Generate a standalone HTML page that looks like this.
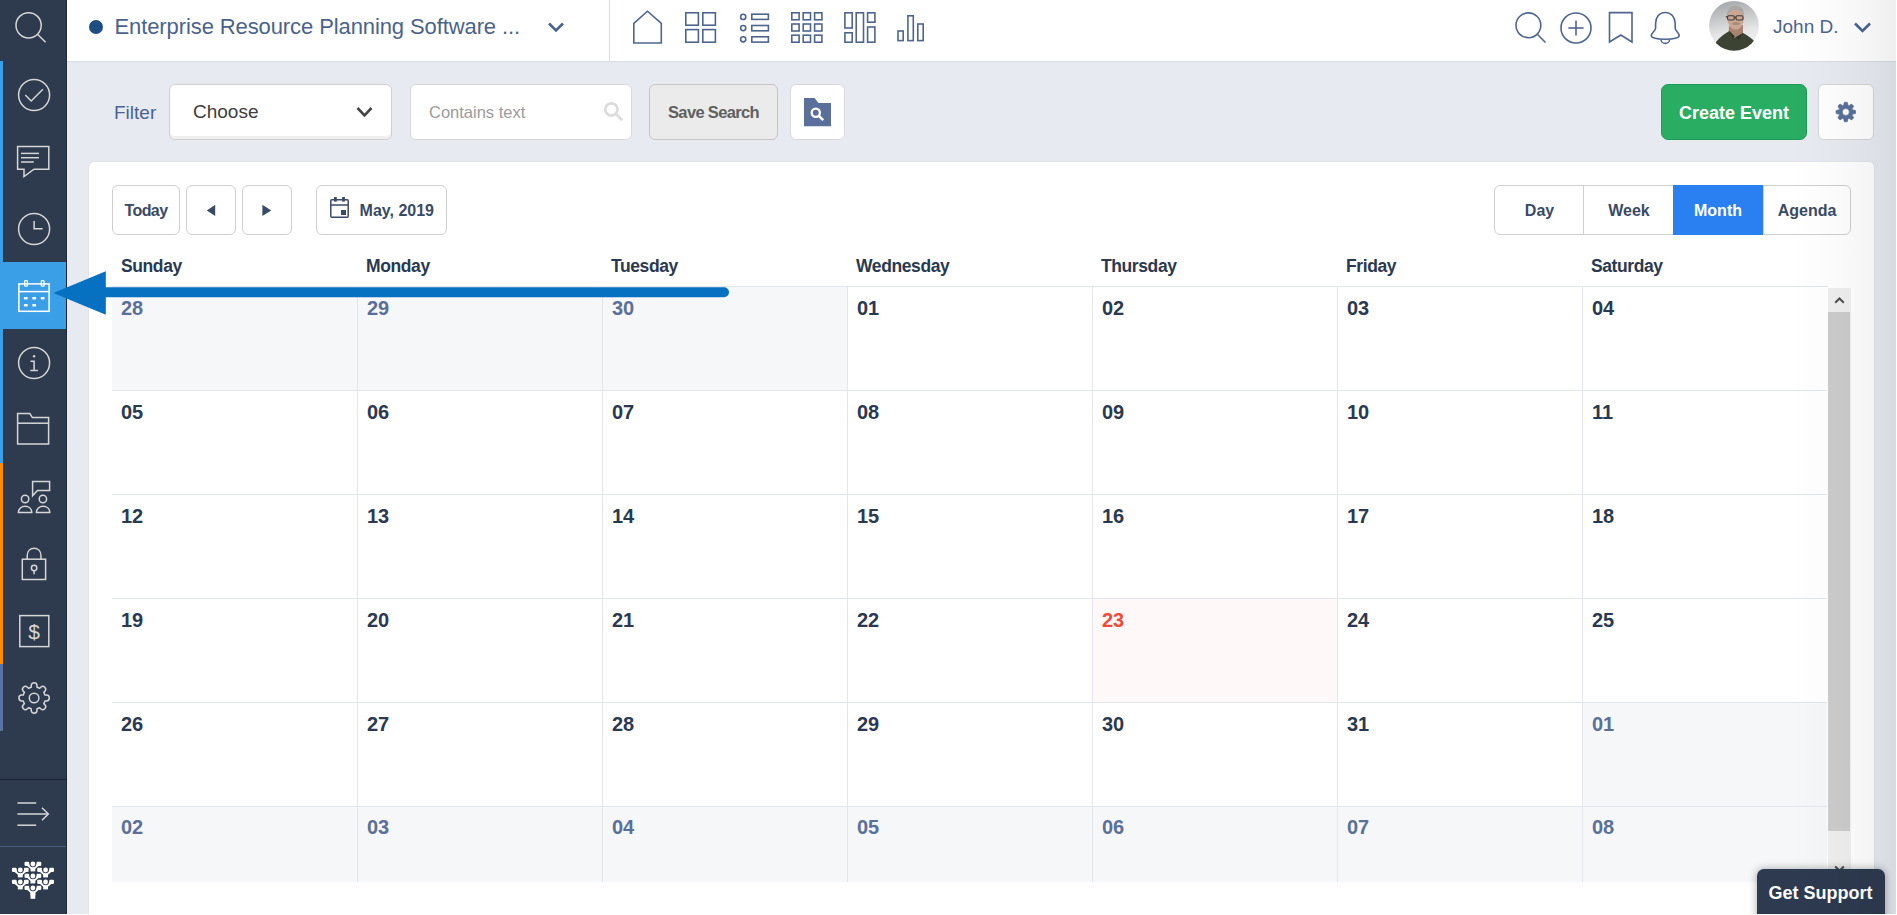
<!DOCTYPE html>
<html><head><meta charset="utf-8">
<style>
*{margin:0;padding:0;box-sizing:border-box}
html,body{width:1897px;height:915px;overflow:hidden;background:#e7eaf1;font-family:"Liberation Sans",sans-serif}
.a{position:absolute}
svg{position:absolute;overflow:visible}
.t{position:absolute;white-space:nowrap;line-height:1}
#sb{position:absolute;left:0;top:0;width:67px;height:915px;background:#2e3a4e;border-right:1px solid #1f2838}
#hdr{position:absolute;left:67px;top:0;width:1830px;height:62px;background:#fff;border-bottom:1px solid #d6dce6}
.card{position:absolute;left:89px;top:162px;width:1785px;height:760px;background:#fff;border-radius:5px;box-shadow:0 0 1.5px rgba(0,0,0,0.12)}
.btn{position:absolute;border:1px solid #cfcfcf;border-radius:6px;background:#fff}
.cell{position:absolute;width:245px;height:104px;border-left:1px solid #e3e6ee;border-top:1px solid #e3e6ee;background:#fff}
.cell.o{background:#f6f7f9}
.cell.td{background:#fff8f8}
.num{position:absolute;left:9px;top:11px;font-weight:bold;font-size:20px;color:#2b3950;line-height:1}
.o .num{color:#5a7099}
.td .num{color:#ef4a3b}
.dh{position:absolute;top:257.7px;font-weight:bold;font-size:17.5px;color:#2b3950;line-height:1;letter-spacing:-0.4px}
</style></head><body>
<div id="hdr"></div>
<div class="a" style="left:609px;top:0;width:1px;height:61px;background:#d6dce6"></div>
<svg width="1897" height="62" style="left:0;top:0">
<circle cx="96" cy="27" r="7" fill="#1f4e82"/>
<g fill="none" stroke="#4a6491" stroke-width="2.6"><polyline points="549,23.5 556,30.5 563,23.5"/><polyline points="1855,23.5 1862.5,31 1870,23.5"/></g>
<g fill="none" stroke="#4e6590" stroke-width="1.6">
<path d="M633.8,43 V23.3 L647.5,11.2 L661.3,23.3 V43 Z"/>
<rect x="685.8" y="12.8" width="12.6" height="12.4"/><rect x="702.8" y="12.8" width="12.6" height="12.4"/>
<rect x="685.8" y="29.6" width="12.6" height="12.6"/><rect x="702.8" y="29.6" width="12.6" height="12.6"/>
<circle cx="743.2" cy="16.9" r="2.6"/><circle cx="743.2" cy="28.1" r="2.6"/><circle cx="743.2" cy="39.3" r="2.6"/>
<rect x="751.8" y="14.2" width="16.6" height="5.2"/><rect x="751.8" y="25.5" width="16.6" height="5.3"/><rect x="751.8" y="36.8" width="16.6" height="5.3"/>
<rect x="791.8" y="12.8" width="7.3" height="7"/><rect x="803.2" y="12.8" width="7.3" height="7"/><rect x="814.6" y="12.8" width="7.3" height="7"/>
<rect x="791.8" y="24" width="7.3" height="7"/><rect x="803.2" y="24" width="7.3" height="7"/><rect x="814.6" y="24" width="7.3" height="7"/>
<rect x="791.8" y="35.2" width="7.3" height="7"/><rect x="803.2" y="35.2" width="7.3" height="7"/><rect x="814.6" y="35.2" width="7.3" height="7"/>
<rect x="844.9" y="12.8" width="7.3" height="15.2"/><rect x="844.9" y="32.8" width="7.3" height="9.4"/>
<rect x="856.2" y="12.8" width="7.3" height="29.4"/>
<rect x="867.6" y="12.8" width="7.3" height="9.4"/><rect x="867.6" y="27" width="7.3" height="15.2"/>
<rect x="898" y="31" width="5.2" height="9.6"/><rect x="907.9" y="15.8" width="5.4" height="24.8"/><rect x="917.8" y="24" width="5.4" height="16.6"/>
<circle cx="1528.4" cy="25.3" r="12.4"/><line x1="1537.3" y1="34.2" x2="1545.5" y2="42.5"/>
<circle cx="1576" cy="28" r="15"/><line x1="1568.4" y1="28" x2="1583.6" y2="28"/><line x1="1576" y1="20.6" x2="1576" y2="35.6"/>
<path d="M1609.5,12.6 H1632 V42 L1620.8,35 L1609.5,42 Z"/>
<path d="M1665.2,12.5 C1659,12.5 1655.6,17.5 1655.6,23.5 L1655.6,28 C1655.6,31 1651.3,33 1651.3,35.6 C1651.3,38.3 1657,39.2 1665.2,39.2 C1673.4,39.2 1679.2,38.3 1679.2,35.6 C1679.2,33 1675.2,31 1675.2,28 L1675.2,23.5 C1675.2,17.5 1671.4,12.5 1665.2,12.5 Z"/>
<path d="M1661,39.4 A4.3,4 0 0 0 1669.6,39.4"/>
</g>
</svg>
<div class="t" style="left:114.5px;top:16.4px;font-size:22px;color:#4b6389;letter-spacing:-0.1px">Enterprise Resource Planning Software ...</div>
<svg width="52" height="52" style="left:1708px;top:0px" viewBox="0 0 52 52">
<defs><linearGradient id="av" x1="0.3" y1="0" x2="0.5" y2="1"><stop offset="0" stop-color="#a3a7ab"/><stop offset="0.65" stop-color="#e6e6e6"/><stop offset="1" stop-color="#f0f0f0"/></linearGradient>
<clipPath id="avc"><circle cx="26" cy="25.8" r="24.9"/></clipPath></defs>
<circle cx="26" cy="25.8" r="24.9" fill="url(#av)"/>
<g clip-path="url(#avc)">
<path d="M21,26 L20.5,34 L27,42 L35,34 L35,25 Z" fill="#a88470"/>
<ellipse cx="27.6" cy="18" rx="8.4" ry="11.6" fill="#caa592"/>
<path d="M19.3,17 C18.6,9 22,5.8 27.5,5.8 C33,5.8 36.6,9 36,17 C35,12.5 32.5,10.2 27.5,10.2 C22.5,10.2 20.3,12.5 19.3,17 Z" fill="#aaa7a2"/>
<ellipse cx="28" cy="23.5" rx="3.6" ry="1.6" fill="#8f7a70" opacity="0.6"/>
<g fill="none" stroke="#3f3a36" stroke-width="1.1"><rect x="19.6" y="15.8" width="6.6" height="4.2" rx="1.2"/><rect x="28" y="15.8" width="7" height="4.2" rx="1.2"/><line x1="26.2" y1="17.2" x2="28" y2="17.2"/><line x1="17.8" y1="16.6" x2="19.6" y2="17"/></g>
<path d="M8,42 C12,37 17,33.5 21.5,31 L26.5,38 L35,33 C40,35.5 44,38.5 47,42 L47,56 L8,56 Z" fill="#3d4332"/>
<path d="M21.5,31 L24.5,38.5 L27,36.5 Z M35,33 L30.5,40.5 L28,37 Z" fill="#30352a"/>
</g>
</svg>
<div class="t" style="left:1773px;top:16.6px;font-size:19px;color:#4a6491">John D.</div>
<div class="t" style="left:114px;top:102.9px;font-size:19px;color:#4a6491">Filter</div>
<div class="btn" style="left:169px;top:84px;width:223px;height:56px;border-color:#d0d0d0;box-shadow:inset 0 -3px 0 #f0f0f0"></div>
<div class="t" style="left:193px;top:102.4px;font-size:19px;color:#3d3d3d">Choose</div>
<svg width="20" height="20" style="left:0;top:0"><polyline points="357.5,108 364.5,115.3 371.5,108" fill="none" stroke="#444" stroke-width="2.6"/></svg>
<div class="btn" style="left:410px;top:84px;width:222px;height:56px;border-color:#d9d9d9"></div>
<div class="t" style="left:429px;top:104.4px;font-size:16.5px;color:#9b9b9b">Contains text</div>
<svg width="10" height="10" style="left:0;top:0"><g fill="none" stroke="#dcdcdc" stroke-width="2.8"><circle cx="611.4" cy="109.4" r="6.1"/><line x1="615.8" y1="113.8" x2="622.2" y2="120.2"/></g></svg>
<div class="btn" style="left:649px;top:84px;width:129px;height:56px;background:#ebebeb;border-color:#c4c4c4"></div>
<div class="t" style="left:668px;top:104px;font-size:16.5px;font-weight:bold;color:#606060;letter-spacing:-0.65px">Save Search</div>
<div class="btn" style="left:790px;top:84px;width:55px;height:56px;border-color:#d9d9d9"></div>
<svg width="10" height="10" style="left:0;top:0"><path d="M804,98 H814.6 L818.4,103 H831 V126.3 H804 Z" fill="#5a709a"/><g fill="none" stroke="#fff"><circle cx="815.8" cy="112.8" r="4.1" stroke-width="2.3"/><line x1="818.8" y1="115.8" x2="823.2" y2="120.2" stroke-width="2.6"/></g></svg>
<div class="a" style="left:1661px;top:84px;width:146px;height:56px;background:#29ad62;border:1px solid #1f9b55;border-radius:7px"></div>
<div class="t" style="left:1679px;top:103.8px;font-size:18px;font-weight:bold;color:#fff">Create Event</div>
<div class="btn" style="left:1818px;top:84px;width:56px;height:56px;border-color:#d5d5d5"></div>
<svg width="10" height="10" style="left:0;top:0"><g transform="translate(1845.8,112)" fill="#5a709a" stroke="#5a709a" stroke-width="0.7" stroke-linejoin="round" fill-rule="evenodd">
<path d="M-2.30,-6.51 L-1.45,-9.70 L1.45,-9.70 L2.30,-6.51 A6.90,6.90 0 0 1 2.97,-6.23 L5.83,-7.88 L7.88,-5.83 L6.23,-2.97 A6.90,6.90 0 0 1 6.51,-2.30 L9.70,-1.45 L9.70,1.45 L6.51,2.30 A6.90,6.90 0 0 1 6.23,2.97 L7.88,5.83 L5.83,7.88 L2.97,6.23 A6.90,6.90 0 0 1 2.30,6.51 L1.45,9.70 L-1.45,9.70 L-2.30,6.51 A6.90,6.90 0 0 1 -2.97,6.23 L-5.83,7.88 L-7.88,5.83 L-6.23,2.97 A6.90,6.90 0 0 1 -6.51,2.30 L-9.70,1.45 L-9.70,-1.45 L-6.51,-2.30 A6.90,6.90 0 0 1 -6.23,-2.97 L-7.88,-5.83 L-5.83,-7.88 L-2.97,-6.23 A6.90,6.90 0 0 1 -2.30,-6.51 Z M3.5,0 A3.5,3.5 0 1 0 -3.5,0 A3.5,3.5 0 1 0 3.5,0 Z"/>
</g></svg>
<div class="card"></div>
<div class="btn" style="left:112px;top:185px;width:68px;height:50px"></div>
<div class="t" style="left:124.5px;top:203.1px;font-size:16px;font-weight:bold;color:#3a4a66;letter-spacing:-0.6px">Today</div>
<div class="btn" style="left:186px;top:185px;width:50px;height:50px"></div>
<div class="btn" style="left:242px;top:185px;width:50px;height:50px"></div>
<div class="btn" style="left:316px;top:185px;width:131px;height:50px"></div>
<svg width="10" height="10" style="left:0;top:0">
<polygon points="206.8,210.4 215.2,204.8 215.2,216" fill="#3a4a66"/>
<polygon points="262.4,204.8 271.2,210.4 262.4,216" fill="#3a4a66"/>
<g fill="none" stroke="#3a4a66" stroke-width="1.5"><rect x="330.8" y="199.8" width="17.4" height="17.4" rx="1"/><line x1="331" y1="205" x2="348" y2="205"/></g>
<g fill="#3a4a66"><rect x="334" y="197" width="2.8" height="4.6"/><rect x="342.1" y="197" width="2.8" height="4.6"/><rect x="341" y="210" width="5" height="5"/></g>
</svg>
<div class="t" style="left:359.6px;top:203.1px;font-size:16px;font-weight:bold;color:#3a4a66">May, 2019</div>
<div class="btn" style="left:1494px;top:185px;width:357px;height:50px"></div>
<div class="a" style="left:1583px;top:186px;width:1px;height:48px;background:#cfcfcf"></div>
<div class="a" style="left:1763px;top:186px;width:1px;height:48px;background:#cfcfcf"></div>
<div class="a" style="left:1673px;top:185px;width:90px;height:50px;background:#2a7ff1"></div>
<div class="t" style="left:1539.5px;top:202.5px;font-size:16px;font-weight:bold;color:#3a4a66;transform:translateX(-50%)">Day</div>
<div class="t" style="left:1629px;top:202.5px;font-size:16px;font-weight:bold;color:#3a4a66;transform:translateX(-50%)">Week</div>
<div class="t" style="left:1718px;top:202.5px;font-size:16px;font-weight:bold;color:#fff;transform:translateX(-50%)">Month</div>
<div class="t" style="left:1807px;top:202.5px;font-size:16px;font-weight:bold;color:#3a4a66;transform:translateX(-50%)">Agenda</div>
<div class="dh" style="left:121px">Sunday</div>
<div class="dh" style="left:366px">Monday</div>
<div class="dh" style="left:611px">Tuesday</div>
<div class="dh" style="left:856px">Wednesday</div>
<div class="dh" style="left:1101px">Thursday</div>
<div class="dh" style="left:1346px">Friday</div>
<div class="dh" style="left:1591px">Saturday</div>
<div class="a" style="left:112px;top:286px;width:1716px;height:1px;background:#e3e6ee"></div>
<div class="cell o" style="left:112px;top:286px;height:104px;border-left:0;border-top:0;top:287px;height:103px"><div class="num">28</div></div>
<div class="cell o" style="left:357px;top:286px;height:104px;border-top:0;top:287px;height:103px"><div class="num">29</div></div>
<div class="cell o" style="left:602px;top:286px;height:104px;border-top:0;top:287px;height:103px"><div class="num">30</div></div>
<div class="cell" style="left:847px;top:286px;height:104px;border-top:0;top:287px;height:103px"><div class="num">01</div></div>
<div class="cell" style="left:1092px;top:286px;height:104px;border-top:0;top:287px;height:103px"><div class="num">02</div></div>
<div class="cell" style="left:1337px;top:286px;height:104px;border-top:0;top:287px;height:103px"><div class="num">03</div></div>
<div class="cell" style="left:1582px;top:286px;height:104px;border-top:0;top:287px;height:103px"><div class="num">04</div></div>
<div class="cell" style="left:112px;top:390px;height:104px;border-left:0"><div class="num">05</div></div>
<div class="cell" style="left:357px;top:390px;height:104px"><div class="num">06</div></div>
<div class="cell" style="left:602px;top:390px;height:104px"><div class="num">07</div></div>
<div class="cell" style="left:847px;top:390px;height:104px"><div class="num">08</div></div>
<div class="cell" style="left:1092px;top:390px;height:104px"><div class="num">09</div></div>
<div class="cell" style="left:1337px;top:390px;height:104px"><div class="num">10</div></div>
<div class="cell" style="left:1582px;top:390px;height:104px"><div class="num">11</div></div>
<div class="cell" style="left:112px;top:494px;height:104px;border-left:0"><div class="num">12</div></div>
<div class="cell" style="left:357px;top:494px;height:104px"><div class="num">13</div></div>
<div class="cell" style="left:602px;top:494px;height:104px"><div class="num">14</div></div>
<div class="cell" style="left:847px;top:494px;height:104px"><div class="num">15</div></div>
<div class="cell" style="left:1092px;top:494px;height:104px"><div class="num">16</div></div>
<div class="cell" style="left:1337px;top:494px;height:104px"><div class="num">17</div></div>
<div class="cell" style="left:1582px;top:494px;height:104px"><div class="num">18</div></div>
<div class="cell" style="left:112px;top:598px;height:104px;border-left:0"><div class="num">19</div></div>
<div class="cell" style="left:357px;top:598px;height:104px"><div class="num">20</div></div>
<div class="cell" style="left:602px;top:598px;height:104px"><div class="num">21</div></div>
<div class="cell" style="left:847px;top:598px;height:104px"><div class="num">22</div></div>
<div class="cell td" style="left:1092px;top:598px;height:104px"><div class="num">23</div></div>
<div class="cell" style="left:1337px;top:598px;height:104px"><div class="num">24</div></div>
<div class="cell" style="left:1582px;top:598px;height:104px"><div class="num">25</div></div>
<div class="cell" style="left:112px;top:702px;height:104px;border-left:0"><div class="num">26</div></div>
<div class="cell" style="left:357px;top:702px;height:104px"><div class="num">27</div></div>
<div class="cell" style="left:602px;top:702px;height:104px"><div class="num">28</div></div>
<div class="cell" style="left:847px;top:702px;height:104px"><div class="num">29</div></div>
<div class="cell" style="left:1092px;top:702px;height:104px"><div class="num">30</div></div>
<div class="cell" style="left:1337px;top:702px;height:104px"><div class="num">31</div></div>
<div class="cell o" style="left:1582px;top:702px;height:104px"><div class="num">01</div></div>
<div class="cell o" style="left:112px;top:806px;height:76px;border-left:0"><div class="num" style="top:10px">02</div></div>
<div class="cell o" style="left:357px;top:806px;height:76px"><div class="num" style="top:10px">03</div></div>
<div class="cell o" style="left:602px;top:806px;height:76px"><div class="num" style="top:10px">04</div></div>
<div class="cell o" style="left:847px;top:806px;height:76px"><div class="num" style="top:10px">05</div></div>
<div class="cell o" style="left:1092px;top:806px;height:76px"><div class="num" style="top:10px">06</div></div>
<div class="cell o" style="left:1337px;top:806px;height:76px"><div class="num" style="top:10px">07</div></div>
<div class="cell o" style="left:1582px;top:806px;height:76px"><div class="num" style="top:10px">08</div></div>
<div class="a" style="left:1828px;top:288px;width:23px;height:594px;background:#efefef"></div>
<div class="a" style="left:1828px;top:312px;width:22px;height:519px;background:#cccccc"></div>
<svg width="10" height="10" style="left:0;top:0"><polyline points="1835.2,302.8 1839.5,298.5 1843.8,302.8" fill="none" stroke="#4f4f4f" stroke-width="2"/><polyline points="1835.2,866.5 1839.5,870.8 1843.8,866.5" fill="none" stroke="#4f4f4f" stroke-width="2"/></svg>
<div id="sb"></div>
<div class="a" style="left:0;top:61px;width:3px;height:402px;background:#3a9fe6"></div>
<div class="a" style="left:0;top:463px;width:3px;height:201px;background:#ff8a00"></div>
<div class="a" style="left:0;top:664px;width:3px;height:67px;background:#5a73a0"></div>
<div class="a" style="left:0;top:262px;width:66px;height:67px;background:#3a9fe6"></div>
<div class="a" style="left:0;top:779px;width:66px;height:1px;background:#1c2534"></div>
<div class="a" style="left:0;top:846px;width:66px;height:1px;background:#4a5d7c"></div>
<svg width="67" height="915" style="left:0;top:0">
<g fill="none" stroke="#d6d6d6" stroke-width="1.5">
<circle cx="28.6" cy="25.3" r="12.6"/><line x1="37.5" y1="34.2" x2="45.6" y2="42.3"/>
<circle cx="34.1" cy="95" r="15.5"/><polyline points="25.3,94.9 31.2,101 42.9,89.2"/>
<path d="M17.6,146.6 H48.8 V169.2 H34 L24,176.6 V169.2 H17.6 Z"/>
<line x1="21" y1="153.4" x2="39" y2="153.4"/><line x1="21" y1="157.7" x2="39" y2="157.7"/><line x1="21" y1="162" x2="33.8" y2="162"/>
<circle cx="34.1" cy="229" r="15.5"/><polyline points="34.1,220.9 34.1,228.7 42.6,228.7"/>
<circle cx="34.1" cy="363" r="15.5"/>
<polyline points="30.5,361.3 34.1,361.3 34.1,370.5"/><line x1="30.3" y1="370.5" x2="37.9" y2="370.5"/>
<path d="M17.6,413.6 H29.8 L32.4,417.6 H48.6 V444 H17.6 Z"/><line x1="17.6" y1="423.2" x2="48.6" y2="423.2"/>
<path d="M32.6,481.6 H49.6 V490.4 H37.4 L32.6,495.8 Z"/>
<circle cx="25.1" cy="499" r="3.7"/><circle cx="42.9" cy="499" r="3.7"/>
<path d="M18.4,512.6 C18.4,508.6 21.5,506.3 25.1,506.3 C28.7,506.3 31.8,508.6 31.8,512.6 Z"/>
<path d="M36.4,512.6 C36.4,508.6 39.5,506.3 43.1,506.3 C46.7,506.3 49.8,508.6 49.8,512.6 Z"/>
<path d="M27.2,559.2 V555.8 C27.2,550.9 30.3,548.2 34.1,548.2 C37.9,548.2 41,550.9 41,555.8 V559.2"/>
<rect x="22.3" y="559.2" width="23.3" height="20.3"/>
<circle cx="34.1" cy="568" r="2.7"/><line x1="34.1" y1="570.7" x2="34.1" y2="574.3"/>
<rect x="19.8" y="615.6" width="29" height="31"/>
<circle cx="34.1" cy="698" r="4.8"/>
<path d="M31.20,687.18 L31.20,685.70 A2.90,2.90 0 0 1 37.00,685.70 L37.00,687.18 A11.20,11.20 0 0 1 39.70,688.30 L40.75,687.25 A2.90,2.90 0 0 1 44.85,691.35 L43.80,692.40 A11.20,11.20 0 0 1 44.92,695.10 L46.40,695.10 A2.90,2.90 0 0 1 46.40,700.90 L44.92,700.90 A11.20,11.20 0 0 1 43.80,703.60 L44.85,704.65 A2.90,2.90 0 0 1 40.75,708.75 L39.70,707.70 A11.20,11.20 0 0 1 37.00,708.82 L37.00,710.30 A2.90,2.90 0 0 1 31.20,710.30 L31.20,708.82 A11.20,11.20 0 0 1 28.50,707.70 L27.45,708.75 A2.90,2.90 0 0 1 23.35,704.65 L24.40,703.60 A11.20,11.20 0 0 1 23.28,700.90 L21.80,700.90 A2.90,2.90 0 0 1 21.80,695.10 L23.28,695.10 A11.20,11.20 0 0 1 24.40,692.40 L23.35,691.35 A2.90,2.90 0 0 1 27.45,687.25 L28.50,688.30 A11.20,11.20 0 0 1 31.20,687.18 Z" stroke-linejoin="round"/>
<line x1="17.4" y1="803" x2="36.2" y2="803"/><line x1="17.4" y1="814" x2="48.2" y2="814"/><polyline points="42,807.8 48.3,814 42,820.3"/><line x1="17.4" y1="825.2" x2="36.2" y2="825.2"/>
</g>
<circle cx="34.1" cy="356.2" r="1.2" fill="#d6d6d6"/>
<text x="34.1" y="639" text-anchor="middle" font-family="Liberation Sans" font-size="21" fill="#d6d6d6">$</text>
<g fill="none" stroke="#fff" stroke-width="1.5">
<rect x="18.9" y="283.9" width="30.2" height="27.4"/><line x1="18.9" y1="291.6" x2="49.1" y2="291.6"/>
<rect x="24.6" y="280.6" width="2.8" height="5.6" rx="0.8" stroke-width="1.3"/>
<rect x="41.3" y="280.6" width="2.8" height="5.6" rx="0.8" stroke-width="1.3"/>
</g>
<g fill="#fff">
<rect x="23.8" y="297" width="4" height="2.6" rx="1"/><rect x="32.2" y="297" width="4" height="2.6" rx="1"/><rect x="40.6" y="297" width="4" height="2.6" rx="1"/>
<rect x="23.8" y="303.9" width="4" height="2.6" rx="1"/><rect x="32.2" y="303.9" width="4" height="2.6" rx="1"/>
</g>
<defs><g id="fig">
<path d="M-6,0 L0,5 L6,0" fill="none" stroke="#fff" stroke-width="2.6"/>
<rect x="-2.4" y="3.4" width="4.8" height="4"/>
<rect x="-8.4" y="-2.2" width="4.8" height="4.3" rx="1.3"/><rect x="3.6" y="-2.2" width="4.8" height="4.3" rx="1.3"/>
<circle cx="0" cy="0" r="3.3" fill="#2e3a4e"/>
<circle cx="0" cy="0" r="2.4"/>
</g></defs>
<g fill="#fff">
<use href="#fig" x="32.9" y="864"/>
<use href="#fig" x="20.3" y="870"/><use href="#fig" x="45.6" y="870"/>
<use href="#fig" x="32.9" y="876"/>
<use href="#fig" x="20.3" y="882"/><use href="#fig" x="45.6" y="882"/>
<use href="#fig" x="32.9" y="888"/>
<rect x="30.5" y="893" width="4.8" height="5.8"/>
</g>
</svg>
<svg width="10" height="10" style="left:0;top:0">
<polygon points="53.4,293 105.8,271.3 105.8,314.8" fill="#0670c1"/>
<path d="M104,287.3 H724 A5,5 0 0 1 724,297.3 H104 Z" fill="#0670c1"/>
</svg>
<div class="a" style="left:1757px;top:869px;width:128px;height:60px;background:#2d3a4f;border-radius:7px 7px 0 0;box-shadow:0 0 9px rgba(0,0,0,0.35)"></div>
<div class="t" style="left:1768.5px;top:883.5px;font-size:18px;font-weight:bold;color:#fff">Get Support</div>
<div class="a" style="left:1790px;top:0;width:106px;height:915px;background:linear-gradient(to right,rgba(0,0,0,0) 0%,rgba(0,0,0,0.015) 40%,rgba(0,0,0,0.04) 75%,rgba(0,0,0,0.065) 100%)"></div>
<div class="a" style="left:1896px;top:0;width:1px;height:915px;background:#fff"></div>
<div class="a" style="left:0;top:914px;width:1897px;height:1px;background:#fff"></div>
</body></html>
